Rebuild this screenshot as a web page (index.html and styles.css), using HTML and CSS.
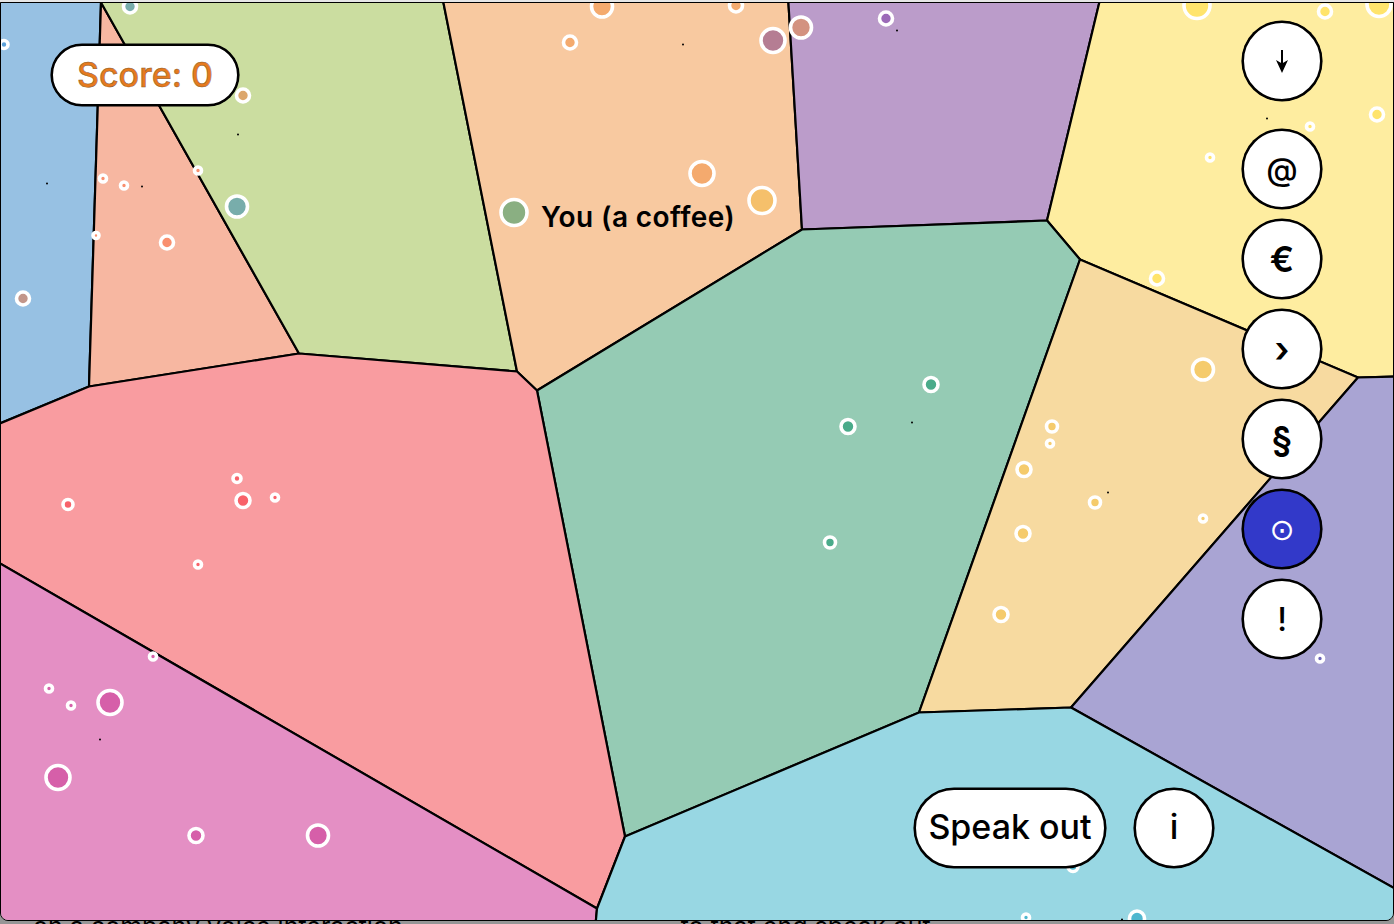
FILE: index.html
```html
<!DOCTYPE html>
<html lang="en">
<head>
    <meta charset="UTF-8">
    <meta name="viewport" content="width=device-width, initial-scale=1.0">
    <title>Speak out</title>
    <link rel="stylesheet" href="styles.css">
</head>
<body>
    <div class="topstrip"></div>
    <main class="stage">
        <svg class="map" viewBox="1 2.5 1392 917" width="1392" height="917">
            <g class="cells">
                <polygon class="cell-blue" points="-5,-5 101,-5 101,2 89,386 -5,425"/>
                <polygon class="cell-salmon" points="101,2 299,353 89,386"/>
                <polygon class="cell-green" points="101,2 103,-5 442,-5 517,371 299,353"/>
                <polygon class="cell-peach" points="442,-5 788,-5 802,229 537,390 517,371"/>
                <polygon class="cell-purple" points="788,-5 1101,-5 1047,220 802,229"/>
                <polygon class="cell-yellow" points="1101,-5 1400,-5 1400,376 1358,377 1080,259 1047,220"/>
                <polygon class="cell-teal" points="802,229 1047,220 1080,259 919,712 625,836 537,390"/>
                <polygon class="cell-tan" points="1080,259 1358,377 1071,707 919,712"/>
                <polygon class="cell-lavender" points="1358,377 1400,376 1400,891 1071,707"/>
                <polygon class="cell-red" points="-5,425 89,386 299,353 517,371 537,390 625,836 597,908 -5,560"/>
                <polygon class="cell-pink" points="-5,560 597,908 595,930 -5,930"/>
                <polygon class="cell-cyan" points="625,836 919,712 1071,707 1400,891 1400,930 595,930 597,908"/>
            </g>

            <g class="specks">
                <circle cx="47" cy="183" r="1"/>
                <circle cx="142" cy="186" r="1"/>
                <circle cx="238" cy="134" r="1"/>
                <circle cx="683" cy="44" r="1"/>
                <circle cx="897" cy="30" r="1"/>
                <circle cx="1267" cy="118" r="1"/>
                <circle cx="912" cy="422" r="1"/>
                <circle cx="1108" cy="492" r="1"/>
                <circle cx="100" cy="739" r="1"/>
                <circle cx="1122" cy="919" r="1"/>
            </g>

            <g class="dots dots-blue">
                <circle cx="4" cy="44" r="4"/>
            </g>
            <g class="dots dots-salmon">
                <circle cx="103" cy="178" r="3.5"/>
                <circle cx="124" cy="185" r="3.5"/>
                <circle cx="198" cy="170" r="3.5"/>
                <circle cx="96" cy="235" r="3"/>
                <circle cx="167" cy="242" r="6.5"/>
            </g>
            <g class="dots">
                <circle class="dot-teal" cx="130" cy="6" r="6.5"/>
                <circle class="dot-teal" cx="237" cy="206" r="10.5"/>
                <circle class="dot-clay" cx="23" cy="298" r="6.5"/>
                <circle class="dot-ochre" cx="243" cy="95" r="6.5"/>
                <circle class="dot-plum" cx="773" cy="40" r="12"/>
                <circle class="dot-rust" cx="801" cy="27" r="10.5"/>
                <circle class="dot-gold" cx="762" cy="200" r="13"/>
                <circle class="dot-you" cx="514" cy="212" r="13"/>
            </g>
            <g class="dots dots-peach">
                <circle cx="570" cy="42" r="6.5"/>
                <circle cx="602" cy="6" r="10.5"/>
                <circle cx="736" cy="5" r="6.5"/>
                <circle cx="702" cy="173" r="12"/>
            </g>
            <g class="dots dots-purple">
                <circle cx="886" cy="18" r="6.5"/>
            </g>
            <g class="dots dots-yellow">
                <circle cx="1197" cy="5" r="13"/>
                <circle cx="1325" cy="11" r="6.5"/>
                <circle cx="1379" cy="4" r="12"/>
                <circle cx="1377" cy="114" r="6.5"/>
                <circle cx="1310" cy="126" r="3.5"/>
                <circle cx="1210" cy="157" r="3.5"/>
                <circle cx="1157" cy="278" r="6.5"/>
            </g>
            <g class="dots dots-tan">
                <circle cx="1203" cy="369" r="10.5"/>
                <circle cx="1052" cy="426" r="5.5"/>
                <circle cx="1050" cy="443" r="3.5"/>
                <circle cx="1024" cy="469" r="7"/>
                <circle cx="1095" cy="502" r="5.5"/>
                <circle cx="1023" cy="533" r="7"/>
                <circle cx="1203" cy="518" r="3.5"/>
                <circle cx="1001" cy="614" r="7"/>
            </g>
            <g class="dots dots-lavender">
                <circle cx="1320" cy="658" r="3.5"/>
            </g>
            <g class="dots dots-teal">
                <circle cx="931" cy="384" r="7"/>
                <circle cx="848" cy="426" r="7"/>
                <circle cx="830" cy="542" r="5.5"/>
            </g>
            <g class="dots dots-red">
                <circle cx="68" cy="504" r="5"/>
                <circle cx="243" cy="500" r="7"/>
                <circle cx="237" cy="478" r="4"/>
                <circle cx="275" cy="497" r="3.5"/>
                <circle cx="198" cy="564" r="3.5"/>
            </g>
            <g class="dots dots-pink">
                <circle cx="153" cy="656" r="3.5"/>
                <circle cx="49" cy="688" r="3.5"/>
                <circle cx="71" cy="705" r="3.5"/>
                <circle cx="110" cy="702" r="12"/>
                <circle cx="58" cy="777" r="12"/>
                <circle cx="196" cy="835" r="7"/>
                <circle cx="318" cy="835" r="10.5"/>
            </g>
            <g class="dots dots-cyan">
                <circle cx="1073" cy="866" r="5"/>
                <circle cx="1026" cy="917" r="3.5"/>
                <circle cx="1137" cy="918" r="7.5"/>
            </g>

            <text class="you-label" x="541" y="226.5">You (a coffee)</text>
        </svg>

        <div class="score">Score: 0</div>

        <nav class="side">
            <button class="round first">
                <svg viewBox="0 0 16 24" width="16" height="24">
                    <path class="arrow-stem" d="M8 1V20"/>
                    <path class="arrow-head" d="M8 24L2 11L8 14.5L14 11Z"/>
                </svg>
            </button>
            <button class="round">@</button>
            <button class="round strong">€</button>
            <button class="round strong">›</button>
            <button class="round strong">§</button>
            <button class="round active">⊙</button>
            <button class="round">!</button>
        </nav>

        <div class="actions">
            <button class="pill">Speak out</button>
            <button class="round lifted">i</button>
        </div>
    </main>
    <div class="behind">
        <span>on a company voice interaction</span>
        <span class="behind-right">to that end speak out</span>
    </div>
</body>
</html>
```

FILE: styles.css
```css
html, body {
    margin: 0;
    height: 100%;
    overflow: hidden;
}
body {
    font-family: "Inter", "Liberation Sans", sans-serif;
    background-color: #969696;
}
.topstrip {
    height: 2px;
    background-color: #e6e6e6;
}
.stage {
    position: relative;
    height: 917px;
    border: 1px solid #000;
    border-radius: 0 0 8px 8px;
    overflow: hidden;
}
.map {
    display: block;
}
.cells polygon {
    stroke: #000;
    stroke-width: 2.2;
    stroke-linejoin: round;
}
.cell-blue { fill: #97c1e3; }
.cell-salmon { fill: #f7b7a1; }
.cell-green { fill: #cbdda0; }
.cell-peach { fill: #f8c9a0; }
.cell-purple { fill: #bb9cca; }
.cell-yellow { fill: #feeda0; }
.cell-teal { fill: #95cbb4; }
.cell-tan { fill: #f7daa0; }
.cell-lavender { fill: #a9a4d3; }
.cell-red { fill: #f99ca0; }
.cell-pink { fill: #e48fc4; }
.cell-cyan { fill: #98d7e3; }

.specks circle { fill: #000; }

.dots circle {
    stroke: #fff;
    stroke-width: 3.6;
}
.dots-blue circle { fill: #5ba0d8; }
.dots-salmon circle { fill: #f98f6e; }
.dots-peach circle { fill: #f4aa6e; }
.dots-purple circle { fill: #9c6bb8; }
.dots-yellow circle { fill: #ffe46c; }
.dots-tan circle { fill: #f5cb6c; }
.dots-lavender circle { fill: #6c64b8; }
.dots-teal circle { fill: #4aab8a; }
.dots-red circle { fill: #f8626a; }
.dots-pink circle { fill: #d65fa9; }
.dots-cyan circle { fill: #4fb7cf; }
.dot-teal { fill: #78adab; }
.dot-clay { fill: #c2968a; }
.dot-ochre { fill: #dca76d; }
.dot-plum { fill: #b57d93; }
.dot-rust { fill: #d39280; }
.dot-gold { fill: #f5c06b; }
.dot-you { fill: #8aaf82; }

.you-label {
    font-size: 28px;
    font-weight: 600;
    letter-spacing: 0.4px;
    fill: #000;
}

.score {
    position: absolute;
    top: 41px;
    left: 50px;
    box-sizing: border-box;
    width: 188px;
    height: 62px;
    border: 2px solid #000;
    border-radius: 31px;
    box-shadow: 0 0 0 0.6px #000;
    background-color: #fff;
    color: #e67a1e;
    -webkit-text-stroke: 0.5px #8a5a2a;
    font-size: 34px;
    font-weight: 500;
    line-height: 58px;
    text-align: center;
}

button {
    box-sizing: border-box;
    border: 2px solid #000;
    box-shadow: 0 0 0 0.6px #000;
    background-color: #fff;
    color: #000;
    font-family: inherit;
    padding: 0;
}
.round {
    display: flex;
    align-items: center;
    justify-content: center;
    width: 80px;
    height: 80px;
    border-radius: 50%;
    font-size: 32px;
    font-weight: 500;
}
.round.strong {
    font-size: 36px;
    font-weight: 600;
}
.round.lifted {
    padding-bottom: 4px;
    font-size: 34px;
}
.round svg {
    display: block;
}
.arrow-stem {
    fill: none;
    stroke: #000;
    stroke-width: 2;
}
.arrow-head {
    fill: #000;
}
.round.active {
    background-color: #3239c9;
    color: #fff;
    font-family: "DejaVu Sans", sans-serif;
    font-size: 30px;
    font-weight: 400;
}
.side {
    position: absolute;
    top: 18px;
    right: 71px;
    display: flex;
    flex-direction: column;
    gap: 10px;
}
.side .first {
    margin-bottom: 18px;
}
.actions {
    position: absolute;
    top: 785px;
    right: 179px;
    display: flex;
    gap: 28px;
}
.pill {
    width: 192px;
    height: 80px;
    padding-bottom: 4px;
    border-radius: 40px;
    font-size: 34px;
    font-weight: 500;
}

.behind {
    display: flex;
    height: 3px;
    padding-left: 33px;
    overflow: hidden;
    font-size: 25px;
    line-height: 25px;
    color: #000;
}
.behind span {
    margin-top: -7px;
}
.behind-right {
    margin-left: 278px;
}
```
